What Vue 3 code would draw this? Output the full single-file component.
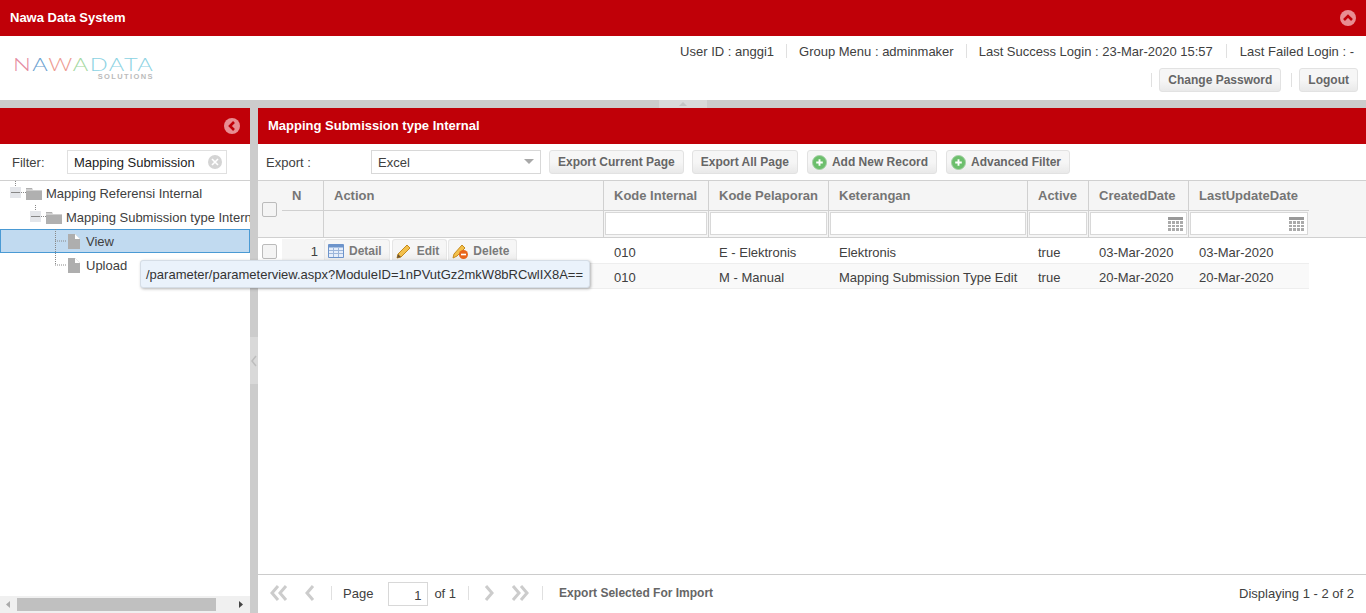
<script setup>
const cols = [
  { t: 'N', w: 42 }, { t: 'Action', w: 280 }, { t: 'Kode Internal', w: 105, f: 1 }, { t: 'Kode Pelaporan', w: 120, f: 1 },
  { t: 'Keterangan', w: 199, f: 1 }, { t: 'Active', w: 61, f: 1 }, { t: 'CreatedDate', w: 100, f: 1, d: 1 }, { t: 'LastUpdateDate', w: 120, f: 1, d: 1 }
]
const rows = [
  { n: 1, c: ['010', 'E - Elektronis', 'Elektronis', 'true', '03-Mar-2020', '03-Mar-2020'] },
  { n: 2, c: ['010', 'M - Manual', 'Mapping Submission Type Edit', 'true', '20-Mar-2020', '20-Mar-2020'] }
]
const widths = [105, 120, 199, 61, 100, 120]
</script>

<template>
  <div class="page">
    <div class="top">
      <b>Nawa Data System</b>
      <svg class="round" width="16" height="16" viewBox="0 0 16 16"><circle cx="8" cy="8" r="8" fill="#e88d92"/><path d="M4 10l4-4 4 4" fill="none" stroke="#c00008" stroke-width="2.6"/></svg>
    </div>
    <div class="head">
      <div class="logo">
        <div class="logo-main"><span class="c1">N</span><span class="c2">A</span><span class="c3">W</span><span class="c4">A</span><span class="c5">DATA</span></div>
        <div class="logo-sub">SOLUTIONS</div>
      </div>
      <div class="info">
        <div class="info-row">
          <span>User ID : anggi1</span><i></i><span>Group Menu : adminmaker</span><i></i><span>Last Success Login : 23-Mar-2020 15:57</span><i class="wide"></i><span>Last Failed Login : -</span>
        </div>
        <div class="info-row second">
          <i></i><button class="btn">Change Password</button><i></i><button class="btn">Logout</button>
        </div>
      </div>
    </div>
    <div class="hsplit"><div class="htab"><svg width="14" height="8" viewBox="0 0 14 8"><path d="M3 6l4-4 4 4z" fill="#c4c4c4"/></svg></div></div>
    <div class="main">
      <aside class="left">
        <div class="title left-title">
          <svg class="round" width="16" height="16" viewBox="0 0 16 16"><circle cx="8" cy="8" r="8" fill="#e88d92"/><path d="M10 4L6 8l4 4" fill="none" stroke="#c00008" stroke-width="2.6"/></svg>
        </div>
        <div class="filter">
          <span class="flabel">Filter:</span>
          <div class="finput"><span>Mapping Submission</span>
            <svg width="14" height="14" viewBox="0 0 14 14"><circle cx="7" cy="7" r="7" fill="#d4d4d4"/><path d="M4 4l6 6M10 4l-6 6" stroke="#fff" stroke-width="1.6"/></svg>
          </div>
        </div>
        <div class="tree">
          <div class="node n1">
            <svg class="twig" width="16" height="24" viewBox="0 0 16 24"><path d="M5.500 0v6M11 11.500h5" stroke="#888" stroke-dasharray="1 1"/><rect x="0" y="6" width="11" height="11" fill="#e4e6ea"/><path d="M1 11.500h9" stroke="#888"/></svg>
            <svg class="fold" width="16" height="24" viewBox="0 0 16 24"><path d="M0 7h6l1 2h9v10H0z" fill="#b0b0b0"/><path d="M0 9h16" stroke="#fff" stroke-width=".8"/></svg>
            <span>Mapping Referensi Internal</span>
          </div>
          <div class="node n2">
            <svg class="twig" width="16" height="24" viewBox="0 0 16 24"><path d="M5.500 0v6M11 11.500h5" stroke="#888" stroke-dasharray="1 1"/><rect x="0" y="6" width="11" height="11" fill="#e4e6ea"/><path d="M1 11.500h9" stroke="#888"/></svg>
            <svg class="fold" width="16" height="24" viewBox="0 0 16 24"><path d="M0 7h6l1 2h9v10H0z" fill="#b0b0b0"/><path d="M0 9h16" stroke="#fff" stroke-width=".8"/></svg>
            <span>Mapping Submission type Internal</span>
          </div>
          <div class="node n3 sel">
            <svg class="twig" width="12" height="24" viewBox="0 0 12 24"><path d="M.5 0v24M0 12h11" stroke="#888" stroke-dasharray="1 1"/></svg>
            <svg class="fold" width="14" height="24" viewBox="0 0 14 24"><path d="M1 5h7l5 5v10H1z" fill="#aeaeae"/><path d="M8 5v5h5" fill="#fff"/></svg>
            <span>View</span>
          </div>
          <div class="node n3">
            <svg class="twig" width="12" height="24" viewBox="0 0 12 24"><path d="M.5 0v12M0 12h11" stroke="#888" stroke-dasharray="1 1"/></svg>
            <svg class="fold" width="14" height="24" viewBox="0 0 14 24"><path d="M1 5h7l5 5v10H1z" fill="#aeaeae"/><path d="M8 5v5h5" fill="#fff"/></svg>
            <span>Upload</span>
          </div>
        </div>
        <div class="hscroll">
          <svg width="17" height="17" viewBox="0 0 17 17"><path d="M10 5v7L6 8.500z" fill="#aaa"/></svg>
          <div class="thumb"></div>
          <svg class="sr" width="17" height="17" viewBox="0 0 17 17"><path d="M6 5v7l4-3.500z" fill="#444"/></svg>
        </div>
      </aside>
      <div class="vsplit"><div class="vtab"><svg width="8" height="14" viewBox="0 0 8 14"><path d="M6 2L2 7l4 5" fill="none" stroke="#bdbdbd" stroke-width="1.500"/></svg></div></div>
      <section class="right">
        <div class="title">Mapping Submission type Internal</div>
        <div class="toolbar">
          <span class="exp">Export :</span>
          <div class="select"><span>Excel</span><svg width="10" height="6" viewBox="0 0 10 6"><path d="M0 0h10L5 5z" fill="#a8a8a8"/></svg></div>
          <button class="btn">Export Current Page</button>
          <button class="btn">Export All Page</button>
          <button class="btn ic"><svg width="15" height="15" viewBox="0 0 16 16"><circle cx="8" cy="8" r="7.500" fill="#6cbf6c" stroke="#a5cfa5"/><path d="M8 4.500v7M4.500 8h7" stroke="#fff" stroke-width="2"/></svg>Add New Record</button>
          <button class="btn ic"><svg width="15" height="15" viewBox="0 0 16 16"><circle cx="8" cy="8" r="7.500" fill="#6cbf6c" stroke="#a5cfa5"/><path d="M8 4.500v7M4.500 8h7" stroke="#fff" stroke-width="2"/></svg>Advanced Filter</button>
        </div>
        <div class="ghead">
          <div class="gcheck"><span class="cb"></span></div>
          <div v-for="c in cols" :key="c.t" class="gcol" :style="{ width: c.w + 'px' }">
            <div class="gt">{{ c.t }}</div>
            <div class="gf">
              <div v-if="c.f" class="fi">
                <svg v-if="c.d" width="15" height="14" viewBox="0 0 15 14"><path d="M0 0h15v3H0z" fill="#999"/><path d="M0 4h15v10H0z" fill="#aaa"/><path d="M3.500 4v10M7.500 4v10M11.500 4v10M0 7.500h15M0 10.500h15" stroke="#fff"/></svg>
              </div>
            </div>
          </div>
        </div>
        <div class="gbody">
          <div v-for="r in rows" :key="r.n" class="grow" :class="{ alt: r.n === 2 }">
            <div class="rcheck"><span class="cb"></span></div>
            <div class="rnum">{{ r.n }}</div>
            <div class="racts">
              <button class="abtn"><svg width="16" height="14" viewBox="0 0 16 14"><path d="M.5.500h15v13H.5z" fill="#e6eefa" stroke="#6d94cb"/><path d="M1 1h14v2.500H1z" fill="#6d94cb"/><path d="M5.500 4v9M10.500 4v9M1 6.500h14M1 9.500h14" stroke="#9db6da"/></svg>Detail</button>
              <button class="abtn"><svg width="16" height="16" viewBox="0 0 16 16"><path d="M2 11L11 2l3 3-9 9-4 1z" fill="#f3c04b" stroke="#c48a1e"/><path d="M1 15l1-4 3 3z" fill="#6b5230"/></svg>Edit</button>
              <button class="abtn"><svg width="16" height="16" viewBox="0 0 16 16"><path d="M2 11L10 2l3 3-8 8-4 2z" fill="#f3c04b" stroke="#c48a1e"/><circle cx="11.500" cy="11.500" r="4.500" fill="#e8641b"/><path d="M9 11.500h5" stroke="#fff" stroke-width="1.600"/></svg>Delete</button>
            </div>
            <div v-for="(v, i) in r.c" :key="i" class="cell" :style="{ width: widths[i] + 'px' }">{{ v }}</div>
          </div>
        </div>
        <div class="paging">
          <svg class="first" width="18" height="16" viewBox="0 0 18 16"><path d="M8 1L2 8l6 7M16 1l-6 7 6 7" fill="none" stroke="#ccc" stroke-width="3"/></svg>
          <svg width="12" height="16" viewBox="0 0 12 16"><path d="M9 1L3 8l6 7" fill="none" stroke="#ccc" stroke-width="3"/></svg>
          <i class="s1"></i>
          <span>Page</span>
          <div class="pinput">1</div>
          <span>of 1</span>
          <i class="s2"></i>
          <svg class="first" width="12" height="16" viewBox="0 0 12 16"><path d="M3 1l6 7-6 7" fill="none" stroke="#ccc" stroke-width="3"/></svg>
          <svg width="18" height="16" viewBox="0 0 18 16"><path d="M2 1l6 7-6 7M10 1l6 7-6 7" fill="none" stroke="#ccc" stroke-width="3"/></svg>
          <i class="s3"></i>
          <b>Export Selected For Import</b>
          <span class="disp">Displaying 1 - 2 of 2</span>
        </div>
      </section>
    </div>
    <div class="tip">/parameter/parameterview.aspx?ModuleID=1nPVutGz2mkW8bRCwlIX8A==</div>
  </div>
</template>

<style>
html, body { margin: 0; overflow: hidden; }
</style>
<style scoped>
.page { position: relative; height: 613px; width: 1366px; display: flex; flex-direction: column; font: 13px "Liberation Sans", Arial, sans-serif; color: #404040; background: #fff; overflow: hidden; }
.top { height: 36px; background: #c00008; color: #fff; display: flex; align-items: center; justify-content: space-between; padding: 0 10px; flex: none; }
.top b { margin-bottom: 2px; }
.head { height: 64px; flex: none; display: flex; justify-content: space-between; }
.logo { padding: 22px 0 0 13px; width: 141px; }
.logo-main { font: 300 17px/14px Lato, sans-serif; letter-spacing: 1px; white-space: nowrap; transform: scaleX(1.39); transform-origin: left center; }
.c1 { color: #e58aa0; } .c2 { color: #6a9fcf; } .c3 { color: #ee9a90; } .c4 { color: #a4d8a0; } .c5 { color: #8cd3e3; }
.logo-sub { font: 700 7.500px/7px "Liberation Sans", sans-serif; letter-spacing: 1.400px; color: #bbb; text-align: right; margin-top: 1px; }
.info { display: flex; flex-direction: column; align-items: flex-end; padding: 7px 8px 0 0; }
.info-row { display: flex; align-items: center; height: 16px; padding-right: 4px; }
.info-row i { width: 1px; height: 14px; background: #e0e0e0; margin: 0 12px; }
.info-row i.wide { margin: 0 13px; }
.info-row.second { height: 24px; margin-top: 9px; padding-right: 0; }
.info-row.second i { margin: 0 7px; height: 14px; }
.info-row.second i:nth-of-type(2) { margin: 0 7px 0 10px; }
.btn { height: 24px; border: 1px solid #e2e2e2; border-radius: 3px; background: linear-gradient(#f6f6f6 50%, #e9e9e9); color: #666; font: bold 12px "Liberation Sans", sans-serif; padding: 0 8px; display: flex; align-items: center; box-sizing: border-box; white-space: nowrap; }
.btn.ic { gap: 5px; padding: 0 8px 0 4px; }
.hsplit { height: 8px; background: #ccc; flex: none; position: relative; }
.htab { position: absolute; left: 659px; top: 0; width: 48px; height: 8px; background: #d9d9d9; display: flex; justify-content: center; align-items: flex-start; }
.main { flex: 1; display: flex; min-height: 0; }
.left { width: 250px; display: flex; flex-direction: column; overflow: hidden; flex: none; }
.title { height: 36px; background: #c00008; color: #fff; font-weight: bold; display: flex; align-items: center; padding: 0 0 2px 10px; box-sizing: border-box; flex: none; }
.left-title { justify-content: flex-end; padding: 0 10px 0 0; }
.filter { height: 37px; flex: none; display: flex; align-items: center; border-bottom: 1px solid #d0d0d0; box-sizing: border-box; }
.flabel { margin-left: 12px; width: 55px; }
.finput { width: 160px; height: 24px; border: 1px solid #e0e0e0; box-sizing: border-box; display: flex; align-items: center; justify-content: space-between; padding: 0 4px 0 6px; white-space: nowrap; color: #222; }
.tree { flex: 1; min-height: 0; }
.node { height: 24px; display: flex; align-items: center; white-space: nowrap; box-sizing: border-box; }
.node span { margin-left: 4px; }
.n3 span { margin-left: 5px; }
.twig, .fold { flex: none; }
.n1 { padding-left: 10px; }
.n2 { padding-left: 30px; }
.n3 { padding-left: 55px; }
.sel { background: #c1daf0; box-shadow: inset 0 0 0 1px #4a9ad4; }
.hscroll { height: 17px; flex: none; background: #f0f0f0; display: flex; align-items: center; position: relative; }
.thumb { width: 199px; height: 13px; background: #c0c0c0; }
.sr { margin-left: auto; }
.vsplit { width: 8px; background: #ccc; flex: none; position: relative; display: flex; }
.vtab { position: absolute; top: 229px; left: 0; width: 8px; height: 47px; background: #d9d9d9; display: flex; align-items: center; }
.right { flex: 1; min-width: 0; display: flex; flex-direction: column; }
.toolbar { height: 37px; flex: none; display: flex; align-items: center; border-bottom: 1px solid #d0d0d0; box-sizing: border-box; }
.exp { margin-left: 8px; width: 105px; }
.select { width: 170px; height: 24px; border: 1px solid #d8d8d8; box-sizing: border-box; display: flex; align-items: center; justify-content: space-between; padding: 0 6px; margin-right: 8px; }
.toolbar .btn { margin-right: 9px; }
.toolbar .btn:nth-of-type(1) { margin-right: 8px; }
.ghead { height: 56px; flex: none; background: #f5f5f5; display: flex; border-bottom: 1px solid #d0d0d0; }
.gcheck { width: 24px; flex: none; display: flex; align-items: center; padding-left: 4px; box-sizing: border-box; }
.cb { width: 13px; height: 13px; border: 1px solid #bbb; border-radius: 2px; background: #f4f4f4; display: block; }
.gcol { flex: none; box-sizing: border-box; display: flex; flex-direction: column; }
.gt { height: 30px; box-sizing: border-box; border-bottom: 1px solid #d0d0d0; border-right: 1px solid #d0d0d0; padding-left: 10px; display: flex; align-items: center; font-weight: bold; color: #757575; white-space: nowrap; }
.gcol:last-child .gt, .gcol:last-child .gf { border-right: none; }
.gf { flex: 1; border-right: 1px solid #d0d0d0; padding: 1px; display: flex; }
.fi { flex: 1; background: #fff; border: 1px solid #d8d8d8; display: flex; justify-content: flex-end; align-items: center; padding-right: 3px; box-sizing: border-box; margin-bottom: 1px; }
.gbody { flex: 1; min-height: 0; padding-top: 1px; }
.grow { height: 25px; display: flex; align-items: center; border-bottom: 1px solid #eee; width: 1051px; box-sizing: border-box; }
.grow.alt { background: #f9f9f9; }
.rcheck { width: 24px; flex: none; padding-left: 4px; box-sizing: border-box; }
.rnum { width: 42px; height: 100%; background: #f5f5f5; flex: none; text-align: right; padding: 5px 6px 0 0; box-sizing: border-box; }
.racts { width: 280px; flex: none; display: flex; gap: 1px; box-sizing: border-box; height: 100%; }
.abtn { height: 24px; border: 1px solid #e6e6e6; border-bottom: none; border-radius: 3px 3px 0 0; background: linear-gradient(#f6f6f6 50%, #e9e9e9); color: #7a7a7a; font: bold 12px "Liberation Sans", sans-serif; display: flex; align-items: center; gap: 5px; padding: 0 7px 2px 3px; }
.abtn:first-child { margin-right: 1px; }
.cell { flex: none; box-sizing: border-box; padding: 2px 0 0 10px; white-space: nowrap; }
.paging { height: 39px; flex: none; border-top: 1px solid #ccc; box-sizing: border-box; display: flex; align-items: center; padding: 0 12px 2px; }
.paging i { width: 1px; height: 14px; background: #e0e0e0; flex: none; }
.paging svg { flex: none; }
.first { margin-right: 16px; }
.s1 { margin: 0 11px 0 15px; }
.s2 { margin: 0 14px 0 12px; }
.s3 { margin: 0 16px 0 13px; }
.pinput { width: 40px; height: 24px; border: 1px solid #d8d8d8; box-sizing: border-box; text-align: right; padding: 5px 6px 0 0; margin: 2px 6px 0 15px; }
.paging b { color: #666; font-size: 12px; }
.disp { margin-left: auto; }
.tip { position: absolute; left: 140px; top: 260px; width: 450px; height: 28px; box-sizing: border-box; background: #eaf2fb; border: 1px solid #d5dde6; border-radius: 3px; box-shadow: 1px 1px 3px rgba(0,0,0,.3); padding: 6px 5px; white-space: nowrap; color: #333; }
</style>
